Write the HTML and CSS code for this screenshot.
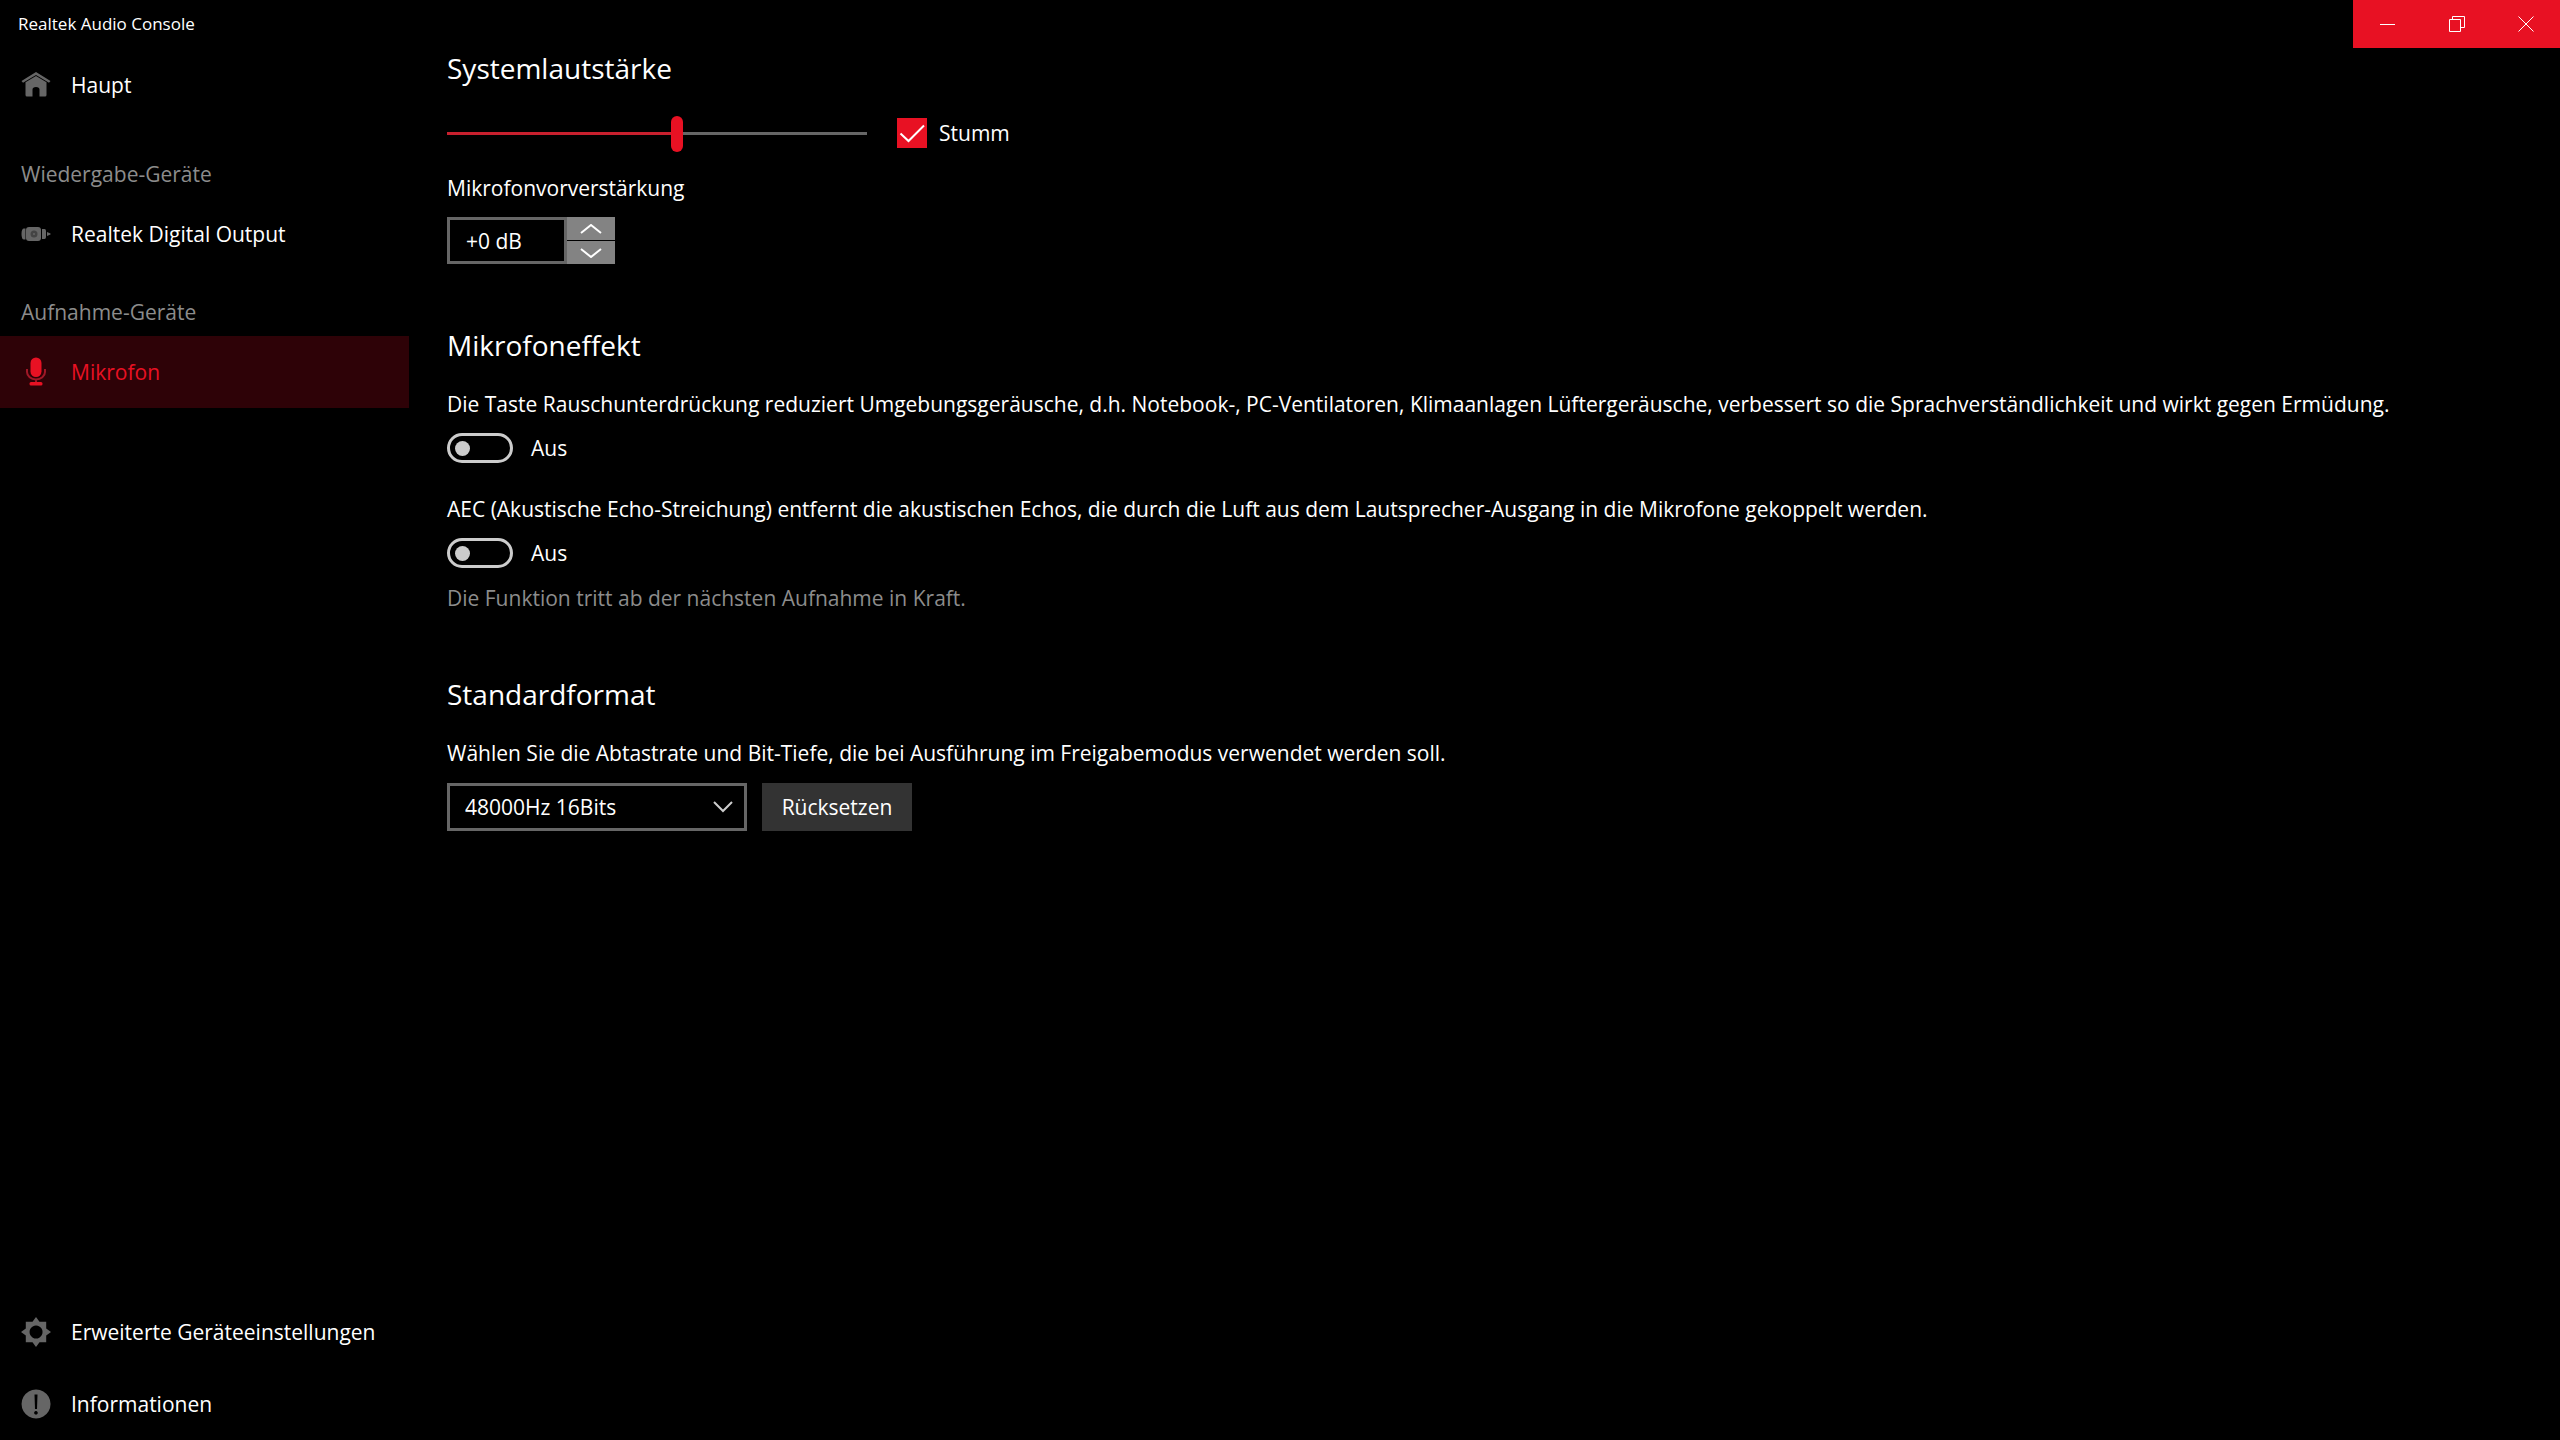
FILE: index.html
```
<!DOCTYPE html>
<html lang="de">
<head>
  <meta charset="UTF-8" />
  <meta name="viewport" content="width=device-width, initial-scale=1.0"/>
  <title>Realtek Audio Console</title>
  <link rel="stylesheet" href="styles.css">
</head>
<body>

  <header class="titlebar">
    <h1>Realtek Audio Console</h1>
    <div class="window-buttons">
      <button type="button" aria-label="Minimieren">
        <svg width="16" height="16" viewBox="0 0 16 16"><path d="M0 8.5h15"/></svg>
      </button>
      <button type="button" aria-label="Verkleinern">
        <svg width="16" height="16" viewBox="0 0 16 16"><path d="M.5 3.5h11v12H.5zM3.5 3.5v-3h12v11h-4"/></svg>
      </button>
      <button type="button" aria-label="Schließen">
        <svg width="16" height="16" viewBox="0 0 16 16"><path d="M.5.5l15 15M15.5.5l-15 15"/></svg>
      </button>
    </div>
  </header>

  <div class="layout">
    <nav class="sidebar">
      <a href="#" class="nav-item">
        <svg class="icon" viewBox="0 0 30 30">
          <path d="M15 2L29.500 11L28 12.800L15 4.900L2 12.800L.5 11z"/>
          <path d="M15 6l10.500 6.300V25q0 1.500-1.500 1.500H18.500v-7q0-2.500-3.500-2.500t-3.500 2.500v7H6q-1.500 0-1.500-1.500V12.300z"/>
        </svg>
        Haupt
      </a>

      <h2 class="nav-title">Wiedergabe-Geräte</h2>
      <a href="#" class="nav-item">
        <svg class="icon" viewBox="0 0 30 30">
          <path d="M3 9.500h1.500v11H3q-2.500 0-2.500-5.500T3 9.500z"/>
          <rect x="5" y="8" width="15" height="14" rx="3"/>
          <path d="M21 10h2.500q1.500 0 1.500 2v6q0 2-1.500 2H21z"/>
          <path d="M26 13l3.500 1.500v1L26 17z"/>
          <circle class="plug-hole" cx="13" cy="15" r="3.500"/>
          <circle cx="13" cy="15" r="1"/>
        </svg>
        Realtek Digital Output
      </a>

      <h2 class="nav-title">Aufnahme-Geräte</h2>
      <a href="#" class="nav-item active">
        <svg class="icon" viewBox="0 0 30 30">
          <rect x="9.500" y="0.500" width="11" height="19.500" rx="5.500"/>
          <path class="mic-stand" d="M6 12v3a9 7.500 0 0 0 18 0v-3M15 22.500v4"/>
          <rect x="8.500" y="25" width="13" height="3.500" rx="1.500"/>
        </svg>
        Mikrofon
      </a>

      <div class="nav-bottom">
        <a href="#" class="nav-item">
          <svg class="icon" viewBox="0 0 30 30">
            <path fill-rule="evenodd" d="M15 0l3.500 4.800h6.700v6.700L30 15l-4.800 3.500v6.700h-6.700L15 30l-3.500-4.800H4.800v-6.700L0 15l4.800-3.500V4.800h6.700zM15 8.500a6.500 6.500 0 1 0 .1 0z"/>
          </svg>
          Erweiterte Geräteeinstellungen
        </a>
        <a href="#" class="nav-item">
          <svg class="icon" viewBox="0 0 30 30">
            <path fill-rule="evenodd" d="M15 .5a14.500 14.500 0 1 0 .1 0zM13.500 5.500h3l-.5 14.500h-2zM15 22a1.800 1.800 0 1 1-.1 0z"/>
          </svg>
          Informationen
        </a>
      </div>
    </nav>

    <main class="content">
      <section>
        <h2>Systemlautstärke</h2>
        <div class="volume">
          <input type="range" class="slider" min="0" max="100" value="55" aria-label="Systemlautstärke">
          <label class="check">
            <input type="checkbox" checked>
            <svg viewBox="0 0 30 30"><path d="M3.500 15.500l8 7.500L27 7.500"/></svg>
            <span>Stumm</span>
          </label>
        </div>
        <label class="boost-label" for="boost">Mikrofonvorverstärkung</label>
        <div class="spinner">
          <input type="text" id="boost" value="+0 dB">
          <div class="spinner-buttons">
            <button type="button" aria-label="Erhöhen">
              <svg width="22" height="10" viewBox="0 0 22 10"><path d="M1 9l10-8 10 8"/></svg>
            </button>
            <button type="button" aria-label="Verringern">
              <svg width="22" height="10" viewBox="0 0 22 10"><path d="M1 1l10 8 10-8"/></svg>
            </button>
          </div>
        </div>
      </section>

      <section>
        <h2>Mikrofoneffekt</h2>
        <div class="effect">
          <p id="noise">Die Taste Rauschunterdrückung reduziert Umgebungsgeräusche, d.h. Notebook-, PC-Ventilatoren, Klimaanlagen Lüftergeräusche, verbessert so die Sprachverständlichkeit und wirkt gegen Ermüdung.</p>
          <label class="toggle">
            <input type="checkbox" role="switch" aria-describedby="noise">
            Aus
          </label>
        </div>
        <div class="effect">
          <p id="aec">AEC (Akustische Echo-Streichung) entfernt die akustischen Echos, die durch die Luft aus dem Lautsprecher-Ausgang in die Mikrofone gekoppelt werden.</p>
          <label class="toggle">
            <input type="checkbox" role="switch" aria-describedby="aec">
            Aus
          </label>
        </div>
        <p class="note">Die Funktion tritt ab der nächsten Aufnahme in Kraft.</p>
      </section>

      <section>
        <h2>Standardformat</h2>
        <label for="format">Wählen Sie die Abtastrate und Bit-Tiefe, die bei Ausführung im Freigabemodus verwendet werden soll.</label>
        <div class="format">
          <div class="select">
            <select id="format">
              <option>48000Hz 16Bits</option>
            </select>
            <svg width="20" height="12" viewBox="0 0 20 12"><path d="M1 1l9 9 9-9"/></svg>
          </div>
          <button type="button" class="reset">Rücksetzen</button>
        </div>
      </section>
    </main>
  </div>

</body>
</html>
```
FILE: styles.css
```
* {
  margin: 0;
  padding: 0;
  box-sizing: border-box;
}

body {
  min-height: 100vh;
  display: flex;
  flex-direction: column;
  font-family: 'Open Sans', sans-serif;
  font-size: 21px;
  line-height: 30px;
  background: #000;
  color: #fff;
}

button, input, select {
  font: inherit;
  color: inherit;
  border: none;
  border-radius: 0;
  background: none;
}

svg {
  fill: none;
  stroke: #fff;
}

/* Title bar */
.titlebar {
  height: 48px;
  display: flex;
  justify-content: space-between;
  align-items: center;
  padding-left: 18px;
}

.titlebar h1 {
  font-size: 17px;
  font-weight: normal;
}

.window-buttons {
  display: flex;
  height: 100%;
  background: #e81123;
}

.window-buttons button {
  width: 69px;
  display: flex;
  justify-content: center;
  align-items: center;
}

.layout {
  flex: 1;
  display: flex;
}

/* Sidebar */
.sidebar {
  width: 409px;
  flex-shrink: 0;
  display: flex;
  flex-direction: column;
  padding-top: 1px;
}

.nav-item {
  height: 72px;
  display: flex;
  align-items: center;
  gap: 20px;
  padding-left: 21px;
  color: #fff;
  text-decoration: none;
}

.nav-item.active {
  background: #2e0207;
  color: #e81123;
}

.icon {
  width: 30px;
  height: 30px;
  fill: #666;
  stroke: none;
}

.active .icon {
  fill: #e81123;
}

.plug-hole {
  fill: #444;
}

.mic-stand {
  fill: none;
  stroke: #a01827;
  stroke-width: 2;
}

.nav-title {
  padding: 0 21px;
  margin: 38px 0 9px;
  font-size: 21px;
  font-weight: normal;
  color: #8c8c8c;
}

.nav-item + .nav-title ~ .nav-title {
  margin-top: 27px;
}

.nav-bottom {
  margin-top: auto;
}

/* Content */
.content {
  flex: 1;
  padding: 0 38px;
}

section {
  margin-bottom: 61px;
}

.content h2 {
  margin-bottom: 24px;
  font-size: 28px;
  font-weight: normal;
  line-height: 40px;
}

.volume {
  display: flex;
  align-items: center;
  gap: 30px;
  margin: 30px 0 25px;
}

.slider {
  width: 420px;
  height: 36px;
  margin: -3px 0;
  appearance: none;
}

.slider::-webkit-slider-runnable-track {
  height: 3px;
  background: linear-gradient(to right, #c8202e 55%, #666 55%);
}

.slider::-webkit-slider-thumb {
  appearance: none;
  width: 12px;
  height: 36px;
  margin-top: -16px;
  border-radius: 6px;
  background: #e81123;
}

.check {
  display: grid;
  grid-template-columns: 30px auto;
  column-gap: 12px;
}

.check input {
  grid-area: 1 / 1;
  height: 30px;
  appearance: none;
}

.check input:checked {
  background: #e81123;
}

.check svg {
  grid-area: 1 / 1;
  stroke-width: 2;
}

.boost-label {
  display: block;
  margin-bottom: 14px;
}

.spinner {
  display: flex;
  height: 47px;
}

.spinner input {
  width: 120px;
  padding-left: 16px;
  border: 3px solid #666;
}

.spinner-buttons {
  width: 48px;
  display: grid;
  gap: 1px;
}

.spinner-buttons button {
  display: flex;
  justify-content: center;
  align-items: center;
  background: #838383;
}

.spinner-buttons svg {
  stroke-width: 2;
}

.effect {
  margin-bottom: 31px;
}

.toggle {
  width: max-content;
  display: flex;
  align-items: center;
  gap: 18px;
  margin-top: 14px;
}

.toggle input {
  width: 66px;
  height: 30px;
  display: flex;
  align-items: center;
  padding-left: 5px;
  border: 3px solid #ccc;
  border-radius: 15px;
  appearance: none;
}

.toggle input::before {
  content: "";
  width: 15px;
  height: 15px;
  border-radius: 50%;
  background: #ccc;
}

.note {
  margin-top: -16px;
  color: #8c8c8c;
}

.format {
  display: flex;
  gap: 15px;
  margin-top: 15px;
}

.select {
  display: grid;
  align-items: center;
}

.select select {
  grid-area: 1 / 1;
  width: 300px;
  height: 48px;
  padding-left: 15px;
  border: 3px solid #666;
  appearance: none;
}

.select svg {
  grid-area: 1 / 1;
  justify-self: end;
  margin-right: 14px;
  stroke: #ccc;
  stroke-width: 2;
  pointer-events: none;
}

.reset {
  width: 150px;
  background: #333;
}
```
